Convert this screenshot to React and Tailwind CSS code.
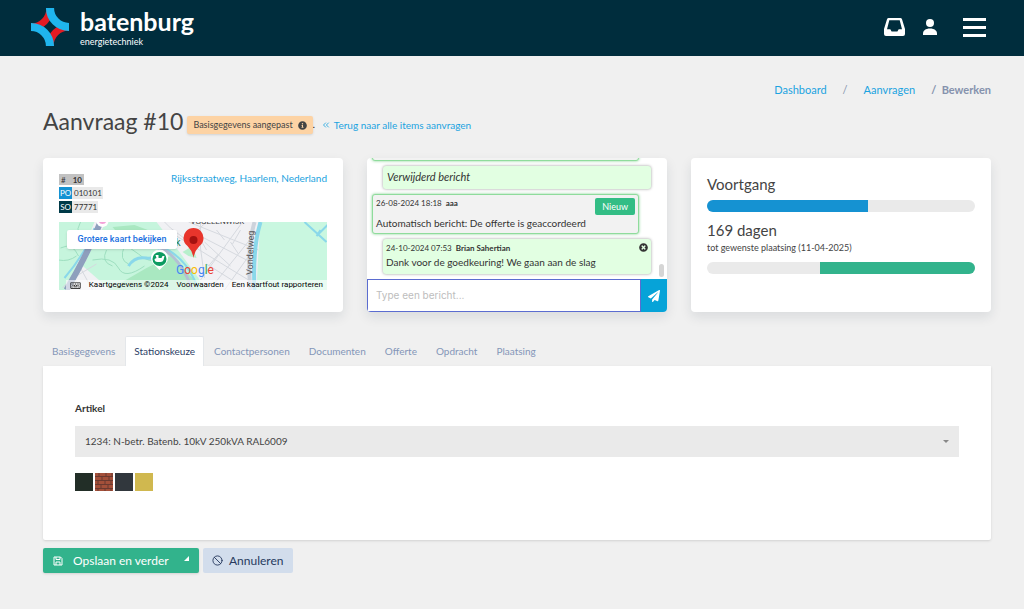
import { useState } from 'react'
import { FaInfoCircle, FaPaperPlane, FaTimesCircle, FaRegKeyboard } from 'react-icons/fa'
import { FiChevronsLeft, FiSlash } from 'react-icons/fi'

const tabs = ['Basisgegevens', 'Stationskeuze', 'Contactpersonen', 'Documenten', 'Offerte', 'Opdracht', 'Plaatsing']

function Logo() {
  return (
    <a href="#" className="flex items-start gap-[11px] text-white">
      <svg viewBox="0 0 112 112" className="mt-[2px] h-[38px] w-[38px]" aria-hidden="true">
        <g fill="none">
          <g stroke="#e31b23" strokeWidth="21">
            <path d="M56 0A56 56 0 0 1 0 56" />
            <path d="M112 56A56 56 0 0 0 56 112" />
          </g>
          <g stroke="#1fb5ee" strokeWidth="24">
            <path d="M56 0A56 56 0 0 0 112 56" />
            <path d="M0 56A56 56 0 0 1 56 112" />
          </g>
        </g>
      </svg>
      <span className="flex flex-col">
        <span className="text-[25px] font-bold leading-[30px]">batenburg</span>
        <span className="text-[9px] leading-[11px]">energietechniek</span>
      </span>
    </a>
  )
}

function Header() {
  return (
    <header className="flex h-14 items-start justify-between bg-[#002d3d] pl-[31px] pr-[38px] pt-[6px]">
      <Logo />
      <nav className="flex h-[42px] items-center text-white">
        <button aria-label="Berichten">
          <svg viewBox="0 0 21 18" className="h-[18px] w-[21px]" fill="currentColor" fillRule="evenodd">
            <path d="M5 0h11a2 2 0 0 1 2 1.300L21 11v5a2 2 0 0 1-2 2H2a2 2 0 0 1-2-2v-5L3 1.300A2 2 0 0 1 5 0ZM5.300 2.200 3 11.200H6.300L7.600 13.400H13.400L14.700 11.200H18L15.700 2.200Z" />
          </svg>
        </button>
        <button aria-label="Account" className="ml-[18px]">
          <svg viewBox="0 0 14 16" className="h-4 w-[14px]" fill="currentColor">
            <circle cx="7" cy="4" r="4" />
            <path d="M0 16v-1.500C0 11.500 2.500 9.400 7 9.400s7 2.100 7 5.100V16Z" />
          </svg>
        </button>
        <button aria-label="Menu" className="ml-[26px] flex flex-col gap-[5px]">
          <span className="h-[3px] w-[23px] bg-white" />
          <span className="h-[3px] w-[23px] bg-white" />
          <span className="h-[3px] w-[23px] bg-white" />
        </button>
      </nav>
    </header>
  )
}

function MapDrawing() {
  return (
    <svg viewBox="0 0 269 68" preserveAspectRatio="xMidYMid slice" className="h-full w-full">
      <rect width="269" height="68" fill="#f1f1f4" />
      <path d="M0 0H36L8 68H0Z" fill="#c6f5dd" />
      <path d="M48 0H98L118 26L140 56L146 68H52L22 42Z" fill="#c6f5dd" />
      <path d="M50 68 88 46 112 34 138 60V68Z" fill="#a9e8c1" />
      <path d="M54 5 76 3 92 9 78 14 60 12Z" fill="#a9e8c1" />
      <path d="M124 30 134 24 138 36 130 34Z" fill="#b8efcc" />
      <path d="M202 0H269V68H198Q200 24 202 0Z" fill="#c9f7e0" />
      <g fill="none" stroke="#d6d9df" strokeWidth="1">
        <path d="M112 6 128 18 148 0M118 14 190 58M130 0 200 28M142 58 184 0M154 64 196 12M166 68 196 26M134 10 192 40M146 20 172 44M148 42 186 66M158 8 166 18M172 20 180 32M160 32 150 44M182 8 174 22M140 14 148 28" />
        <path d="M112 6 106 0M142 0V26L146 56M8 60 38 42M14 52 22 68M22 46 34 68M4 66 28 38" />
      </g>
      <g fill="none" stroke="#9edfc0" strokeWidth="1">
        <path d="M44 24Q64 18 80 32T106 30M34 38Q54 34 60 46T86 44M48 28Q42 40 54 44M66 24Q60 38 70 42M52 12Q72 22 88 12" />
        <path d="M2 26Q14 20 20 34M0 38Q10 40 18 34M22 0Q14 14 30 20" />
      </g>
      <g fill="none" stroke="#8ad8ea">
        <path d="M70 44Q76 34 88 36T102 22" strokeWidth="3" />
        <path d="M100 24Q124 32 136 58L140 68" strokeWidth="2" />
        <path d="M202 0Q194 26 196 68" strokeWidth="4" />
        <path d="M246 0 268 20M258 14 269 3M258 14 262 8" strokeWidth="2" />
        <path d="M36 6Q28 30 6 56" strokeWidth="2" />
      </g>
      <path d="M196 0Q188 28 192 68" fill="none" stroke="#cdd3dc" strokeWidth="4" />
      <path d="M42 0Q28 34 8 68" fill="none" stroke="#8e9fbd" strokeWidth="6" />
      <path d="M96 24Q120 30 134 68" fill="none" stroke="#b3c0d4" strokeWidth="3" />
      <circle cx="44" cy="-1" r="6" fill="#fff" />
      <circle cx="44" cy="-2" r="4" fill="#f3a2d8" />
      <text x="132" y="2" fontSize="8" fontFamily="Roboto, sans-serif" fill="#444">VOGELENWIJK</text>
      <text x="117" y="24" fontSize="10" fontFamily="Roboto, sans-serif" fill="#188255">k</text>
      <text transform="translate(194 53) rotate(-88)" fontSize="9" fontFamily="Roboto, sans-serif" fill="#555">Vondelweg</text>
      <path d="M101 48 95 42A8.500 8.500 0 1 1 107 42Z" fill="#fff" />
      <circle cx="101" cy="37" r="7" fill="#0c9b61" />
      <path d="M97 33h3v3h3l1-2h2l-1 4a3 3 0 0 1-3 2h-3q-3 0-3-3l2-1Z" fill="#fff" />
      <path d="M135 36Q134 29 129 24A10 10 0 1 1 141 24Q136 29 135 36Z" fill="#e8352c" />
      <circle cx="135" cy="18" r="4" fill="#a51210" />
    </svg>
  )
}

function LocationCard() {
  return (
    <section className="h-[154px] rounded-sm bg-white px-4 pt-4 shadow-[0_5px_12px_rgba(18,38,63,0.1)]">
      <div className="flex items-start justify-between">
        <div className="flex flex-col items-start gap-[2px] text-[8px] leading-3 text-[#333]">
          <span className="flex h-[11px] items-center gap-[7px] bg-[#c2c2c2] px-[2px]">
            <span>#</span>
            <b>10</b>
          </span>
          <span className="flex bg-[#e9e9e9] pr-px">
            <span className="w-[13px] bg-[#1592d2] text-center text-white">PO</span>
            <span className="pl-[2px]">010101</span>
          </span>
          <span className="flex bg-[#e9e9e9] pr-px">
            <span className="w-[13px] bg-[#003a48] text-center text-white">SO</span>
            <span className="pl-[2px]">77771</span>
          </span>
        </div>
        <a href="#" className="-mt-1 text-[10px] leading-4 text-[#1ba3e0]">Rijksstraatweg, Haarlem, Nederland</a>
      </div>
      <div className="relative mt-[9px] h-[68px] overflow-hidden font-['Roboto',sans-serif]">
        <MapDrawing />
        <a href="#" className="absolute left-2 top-2 flex h-[19px] w-[110px] items-center justify-center rounded-xs bg-white text-[9px] font-medium text-[#1a6fe0] shadow-sm">
          Grotere kaart bekijken
        </a>
        <span className="absolute left-[117px] top-10 text-[12px] leading-4">
          <span className="text-[#4285f4]">G</span>
          <span className="text-[#ea4335]">o</span>
          <span className="text-[#fbbc05]">o</span>
          <span className="text-[#4285f4]">g</span>
          <span className="text-[#34a853]">l</span>
          <span className="text-[#ea4335]">e</span>
        </span>
        <div className="absolute bottom-0 right-0 flex h-[10px] items-center gap-2 whitespace-nowrap bg-white/60 px-1 text-[8px] leading-[10px] text-black">
          <FaRegKeyboard className="h-[9px] w-[11px] shrink-0" />
          <span>Kaartgegevens ©2024</span>
          <a href="#">Voorwaarden</a>
          <a href="#">Een kaartfout rapporteren</a>
        </div>
      </div>
    </section>
  )
}

function ChatCard() {
  return (
    <section className="flex h-[154px] flex-col overflow-hidden rounded-sm bg-white shadow-[0_5px_12px_rgba(18,38,63,0.1)]">
      <div className="relative flex h-[121px] flex-col justify-end gap-[5px] overflow-hidden pb-[5px] pl-[5px] pr-4 text-[#333]">
        <div className="mr-3 h-10 shrink-0 rounded-[3px] border border-[#8fdc9c] bg-[#f2f2f2] shadow-[0_0_3px_#7fd08d]" />
        <div className="ml-[11px] flex h-[23px] shrink-0 items-center rounded-[3px] bg-[#e2ffe2] px-1 text-[11px] italic shadow-[0_0_3px_#999]">
          Verwijderd bericht
        </div>
        <div className="mr-3 flex h-10 shrink-0 items-start justify-between rounded-[3px] border border-[#8fdc9c] bg-[#f2f2f2] px-[3px] shadow-[0_0_3px_#7fd08d]">
          <div>
            <p className="pt-[2px] text-[8px] leading-3">26-08-2024 18:18 <b className="ml-[2px]">aaa</b></p>
            <p className="mt-[6px] whitespace-nowrap text-[10px] leading-4">Automatisch bericht: De offerte is geaccordeerd</p>
          </div>
          <span className="mt-[3px] rounded-xs bg-[#33bd85] px-[7px] text-[9px] leading-[17px] text-white">Nieuw</span>
        </div>
        <div className="ml-[11px] flex h-[35px] shrink-0 items-start justify-between rounded-[3px] bg-[#e2ffe2] px-[3px] shadow-[0_0_3px_#999]">
          <div>
            <p className="pt-[3px] text-[8px] leading-3">24-10-2024 07:53 <b className="ml-[2px]">Brian Sahertian</b></p>
            <p className="whitespace-nowrap text-[10px] leading-4">Dank voor de goedkeuring! We gaan aan de slag</p>
          </div>
          <button aria-label="Verwijder bericht" className="mt-1">
            <FaTimesCircle className="h-[9px] w-[9px]" />
          </button>
        </div>
        <span className="absolute bottom-[2px] right-[3px] h-[13px] w-[5px] rounded-full bg-[#d5d5d5]" />
      </div>
      <form className="flex h-[33px]" onSubmit={(e) => e.preventDefault()}>
        <input
          type="text"
          aria-label="Bericht"
          placeholder="Type een bericht..."
          className="min-w-0 flex-1 border border-[#5b6cd0] bg-white px-2 font-['Inter',sans-serif] text-[10px] outline-none placeholder:text-[#bdbdbd]"
        />
        <button aria-label="Versturen" className="flex w-[26px] items-center justify-center bg-[#06a3d8] text-white">
          <FaPaperPlane className="h-3 w-3" />
        </button>
      </form>
    </section>
  )
}

function ProgressCard() {
  return (
    <section className="h-[154px] rounded-sm bg-white px-4 pt-4 text-[#444] shadow-[0_5px_12px_rgba(18,38,63,0.1)]">
      <h2 className="text-[15px] leading-5">Voortgang</h2>
      <div className="mt-[6px] h-3 overflow-hidden rounded-full bg-[#eaeaea]">
        <div className="h-full w-[60%] bg-[#1592d2]" />
      </div>
      <h2 className="mt-2 text-[15px] leading-5">169 dagen</h2>
      <p className="text-[9px] leading-4">tot gewenste plaatsing (11-04-2025)</p>
      <div className="mt-[6px] flex h-3 justify-end overflow-hidden rounded-full bg-[#eaeaea]">
        <div className="h-full w-[58%] bg-[#32b38c]" />
      </div>
    </section>
  )
}

function Swatches() {
  return (
    <div className="mt-4 flex gap-[2px]">
      <span className="h-[18px] w-[18px] bg-[#222e27]" />
      <svg viewBox="0 0 18 18" className="h-[18px] w-[18px]">
        <rect width="18" height="18" fill="#a4503a" />
        <path d="M0 3.500h18M0 7.500h18M0 11.500h18M0 15.500h18M4 0v3.500M11 0v3.500M17 0v3.500M7 3.500v4M14 3.500v4M3 7.500v4M10 7.500v4M16 7.500v4M6 11.500v4M13 11.500v4M3 15.500V18M10 15.500V18M16 15.500V18" stroke="#6b3a30" fill="none" />
      </svg>
      <span className="h-[18px] w-[18px] bg-[#31373d]" />
      <span className="h-[18px] w-[18px] bg-[#d0b84f]" />
    </div>
  )
}

export default function App() {
  const [active, setActive] = useState('Stationskeuze')

  return (
    <div className="min-h-screen bg-[#f0f0f0] font-['Lato',sans-serif]">
      <Header />
      <main className="pb-9 pl-[43px] pr-[33px]">
        <nav className="flex justify-end pt-[26px] text-[11px] leading-4 text-[#8592ad]">
          <a href="#" className="text-[#1ba3e0]">Dashboard</a>
          <span className="px-4">/</span>
          <a href="#" className="text-[#1ba3e0]">Aanvragen</a>
          <b className="pl-4">/&nbsp; Bewerken</b>
        </nav>

        <div className="mt-[7px] flex items-center">
          <h1 className="text-[23px] leading-8 text-[#444]">Aanvraag #10</h1>
          <span className="ml-1 mt-2 flex h-[18px] items-center gap-[5px] rounded-xs bg-[#fdd3a4] px-[6px] text-[9px] text-[#444] shadow-sm">
            Basisgegevens aangepast
            <FaInfoCircle className="h-[9px] w-[9px]" />
          </span>
          <span className="mt-2 text-[9px]">.</span>
          <a href="#" className="ml-[6px] mt-2 flex items-center gap-[3px] text-[10px] text-[#1ba3e0]">
            <FiChevronsLeft className="h-[10px] w-[10px]" />
            Terug naar alle items aanvragen
          </a>
        </div>

        <div className="mt-[21px] grid grid-cols-3 gap-6">
          <LocationCard />
          <ChatCard />
          <ProgressCard />
        </div>

        <div className="mt-6 flex items-end gap-px" role="tablist">
          {tabs.map((tab) => (
            <button
              key={tab}
              role="tab"
              aria-selected={tab === active}
              onClick={() => setActive(tab)}
              className={
                tab === active
                  ? 'h-[30px] rounded-t-xs border border-b-0 border-[#e4e7ea] bg-white px-2 text-[10px] text-[#2c3e66]'
                  : 'h-[30px] border border-transparent px-2 text-[10px] text-[#8496b8]'
              }
            >
              {tab}
            </button>
          ))}
        </div>
        <section className="h-[174px] rounded-b-xs bg-white px-8 pt-[34px] shadow-sm">
          <label htmlFor="artikel" className="block text-[10px] font-bold leading-4 text-[#333]">Artikel</label>
          <div className="relative mt-[10px]">
            <select
              id="artikel"
              className="h-[31px] w-full appearance-none bg-[#eaeaea] px-[10px] text-[10px] text-[#444]"
            >
              <option>1234: N-betr. Batenb. 10kV 250kVA RAL6009</option>
            </select>
            <svg viewBox="0 0 6 3" className="pointer-events-none absolute right-[10px] top-[14px] h-[3px] w-[6px]">
              <path d="M0 0h6L3 3Z" fill="#888" />
            </svg>
          </div>
          <Swatches />
        </section>

        <div className="mt-2 flex gap-1">
          <button className="flex h-[25px] w-[156px] items-center rounded-xs bg-[#32b38c] px-[10px] text-[12px] text-white shadow-sm">
            <svg viewBox="0 0 10 10" className="h-[10px] w-[10px]" fill="none" stroke="currentColor">
              <path d="M1 1h6.500L9 2.500V9H1ZM3 1v2.500h4V1M3 9V6h4v3" />
            </svg>
            <span className="ml-[10px]">Opslaan en verder</span>
            <svg viewBox="0 0 5 5" className="mb-1 ml-auto h-[5px] w-[5px]">
              <path d="M5 0v5H0Z" fill="#fff" />
            </svg>
          </button>
          <button className="flex h-[25px] items-center gap-[6px] rounded-xs bg-[#d2ddec] px-[9px] text-[12px] text-[#273a5e]">
            <FiSlash className="h-[11px] w-[11px]" />
            Annuleren
          </button>
        </div>
      </main>
    </div>
  )
}
